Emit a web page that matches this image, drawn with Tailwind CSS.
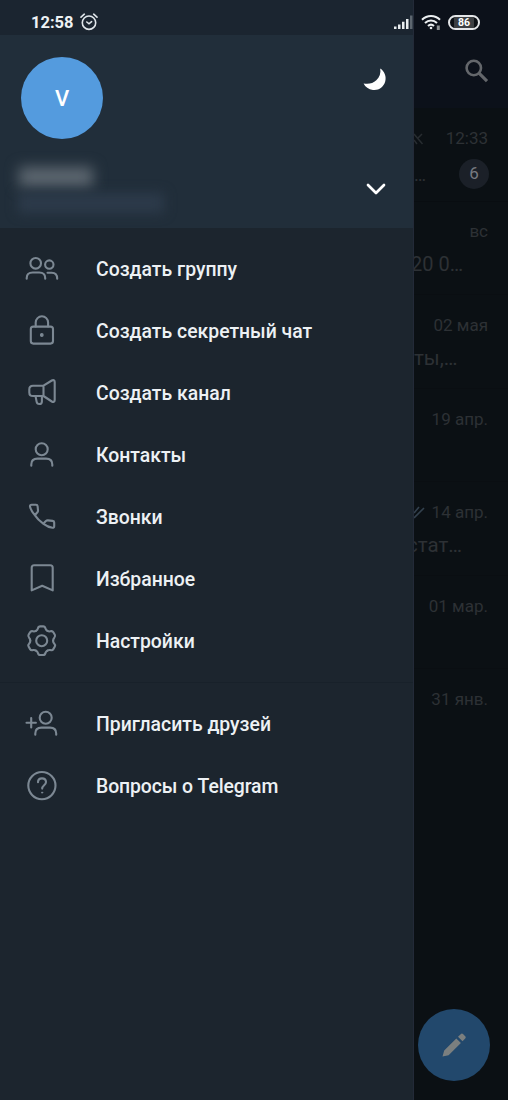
<!DOCTYPE html>
<html lang="ru">
<head>
<meta charset="utf-8">
<title>Telegram</title>
<script src="https://cdn.jsdelivr.net/npm/@tailwindcss/browser@4"></script>
</head>
<body class="bg-[#0b1014]">
<div class="relative flex w-[508px] h-[1100px] overflow-hidden font-['Roboto',sans-serif]">

  <!-- Drawer -->
  <aside class="flex flex-col w-[414px] shrink-0 bg-[#1c252e] border-r border-[#232a38]">
    <header class="flex flex-col h-[228px] bg-[#212e3a] shrink-0">
      <div class="h-[35px] bg-[#1b2530] shrink-0"></div>
      <div class="flex justify-between pl-[21px] pr-[24px] pt-[22px]">
        <div class="flex items-center justify-center size-[82px] rounded-full bg-[#549bde] text-white text-[22px] font-medium">V</div>
        <svg class="mt-[11px]" width="26" height="24" viewBox="0 0 26 24" fill="#fff"><path d="M17.200.4C21.500 3 23.700 8.500 22.200 13.500 20.500 19.500 15.500 22.600 10 21.900 5.500 21.300 2.300 18.900.6 15.400 5.500 16.500 10 15.300 13.300 12.200 16.700 9 18 5 17.200.4Z"/></svg>
      </div>
      <div class="flex justify-between pl-[18px] pr-[27px] pt-[27px]">
        <div class="flex flex-col gap-[5px]">
          <div class="w-[74px] h-[20px] mt-px mb-px ml-px bg-[#5d6770] blur-[7px]"></div>
          <div class="w-[146px] h-[20px] bg-[#2c3a4a] blur-[6px]"></div>
        </div>
        <svg class="mt-[16px]" width="20" height="14" viewBox="0 0 20 14" fill="none" stroke="#fff" stroke-width="2.700" stroke-linecap="round" stroke-linejoin="round"><path d="M2 3l8 8 8-8"/></svg>
      </div>
    </header>

    <nav class="flex flex-col pt-[10px] text-[19.400px] font-medium text-[#edf1f4]">
      <a class="flex items-center h-[62px] pl-[22px] gap-[34px]">
        <svg width="40" height="40" viewBox="0 0 40 40" fill="none" stroke="#7c8893" stroke-width="2.100" stroke-linecap="round" stroke-linejoin="round"><circle cx="13.700" cy="14.300" r="5.300"/><circle cx="27.300" cy="15.600" r="4.200"/><path d="M4.700 29.700V29c0-3.500 2.500-5.500 6-5.500h6.500c3.500 0 6 2 6 5.500v.7M25.500 23.700h4.200c3.500 0 5.500 2.200 5.500 6"/></svg>
        <span class="pt-[2px]">Создать группу</span></a>
      <a class="flex items-center h-[62px] pl-[22px] gap-[34px]">
        <svg width="40" height="40" viewBox="0 0 40 40" fill="none" stroke="#7c8893" stroke-width="2.100" stroke-linecap="round" stroke-linejoin="round"><rect x="8.800" y="15.600" width="22.200" height="17" rx="2.500"/><path d="M13.700 15.500V11.500a6.200 6.200 0 0 1 12.400 0v4"/><circle cx="19.800" cy="24" r="1.300" fill="#7c8893" stroke-width="1.200"/></svg>
        <span class="pt-[2px]">Создать секретный чат</span></a>
      <a class="flex items-center h-[62px] pl-[22px] gap-[34px]">
        <svg width="40" height="40" viewBox="0 0 40 40" fill="none" stroke="#7c8893" stroke-width="2.100" stroke-linecap="round" stroke-linejoin="round"><path d="M21.500 12.700H11c-2.200 0-3.700 1.500-3.700 3.600v3.100c0 2.100 1.500 3.600 3.700 3.600h10.500V12.700l8.300-5.200c1.500-.9 2.900-.3 2.900 1.500v18c0 1.800-1.400 2.400-2.900 1.500L21.500 23M13.500 23l1.100 5.600c.3 1.600 1.200 2.400 2.700 2.400 1.700 0 2.600-1 2.600-2.600V23"/></svg>
        <span class="pt-[2px]">Создать канал</span></a>
      <a class="flex items-center h-[62px] pl-[22px] gap-[34px]">
        <svg width="40" height="40" viewBox="0 0 40 40" fill="none" stroke="#7c8893" stroke-width="2.100" stroke-linecap="round" stroke-linejoin="round"><circle cx="19.700" cy="14.200" r="6"/><path d="M9.300 30.700V29.500c0-3.800 2.400-5.900 6.200-5.900h8.600c3.800 0 6.200 2.100 6.200 5.900v1.200"/></svg>
        <span class="pt-[2px]">Контакты</span></a>
      <a class="flex items-center h-[62px] pl-[22px] gap-[34px]">
        <svg width="40" height="40" viewBox="0 0 40 40" fill="none" stroke="#7c8893" stroke-width="2.100" stroke-linecap="round" stroke-linejoin="round"><path d="M9.600 7.700h4.400c.9 0 1.500.5 1.600 1.400l.4 4.200c.1.800-.1 1.400-.6 2l-2.600 2.900C10.400 15.300 8.500 12.300 8 9.500c-.1-1 .5-1.800 1.600-1.800ZM12.800 18.200c2.200 3.300 5 6.100 8.400 8.500l2.700-2.700c.6-.5 1.200-.7 2-.6l4.700.5c1 .1 1.600.7 1.600 1.600v3.700c0 1.100-.7 1.700-1.800 1.600-3.200-.3-6.300-1.900-9.200-4.100"/></svg>
        <span class="pt-[2px]">Звонки</span></a>
      <a class="flex items-center h-[62px] pl-[22px] gap-[34px]">
        <svg width="40" height="40" viewBox="0 0 40 40" fill="none" stroke="#7c8893" stroke-width="2.100" stroke-linecap="round" stroke-linejoin="round"><path d="M12.200 6.200h16c1.600 0 2.500.9 2.500 2.500v22.700l-10.500-4.700L9.700 31.400V8.700c0-1.600.9-2.500 2.500-2.500Z"/></svg>
        <span class="pt-[2px]">Избранное</span></a>
      <a class="flex items-center h-[62px] pl-[22px] gap-[34px]">
        <svg width="40" height="40" viewBox="0 0 40 40" fill="none" stroke="#7c8893" stroke-width="2.100" stroke-linecap="round" stroke-linejoin="round"><defs><path id="tooth" d="M-5.700-9.900C-4.400-10.600-4.100-11.100-3.800-12.200-3.400-13.800-2.700-14.300-1.500-14.300H1.500C2.700-14.300 3.400-13.800 3.800-12.200 4.100-11.100 4.400-10.600 5.700-9.900"/></defs><g transform="translate(19.700 19.700)"><circle r="5.500"/><use href="#tooth"/><use href="#tooth" transform="rotate(60)"/><use href="#tooth" transform="rotate(120)"/><use href="#tooth" transform="rotate(180)"/><use href="#tooth" transform="rotate(240)"/><use href="#tooth" transform="rotate(300)"/></g></svg>
        <span class="pt-[2px]">Настройки</span></a>
      <div class="h-px mt-[10px] mb-[10px] bg-[#18212a]"></div>
      <a class="flex items-center h-[62px] pl-[22px] gap-[34px]">
        <svg width="40" height="40" viewBox="0 0 40 40" fill="none" stroke="#7c8893" stroke-width="2.100" stroke-linecap="round" stroke-linejoin="round"><circle cx="23.700" cy="13.700" r="6"/><path d="M13.300 30.700V29.500c0-3.800 2.400-5.900 6.200-5.900H28c3.800 0 6.200 2.100 6.200 5.900v1.200M9.200 14v9.400M4.500 18.700h9.400"/></svg>
        <span class="pt-[2px]">Пригласить друзей</span></a>
      <a class="flex items-center h-[62px] pl-[22px] gap-[34px]">
        <svg width="40" height="40" viewBox="0 0 40 40" fill="none" stroke="#7c8893" stroke-width="2.100" stroke-linecap="round" stroke-linejoin="round"><circle cx="19.900" cy="19.600" r="13.600"/><path d="M16 16.300c0-2.300 1.600-3.900 4-3.900s4 1.500 4 3.700c0 3.100-3.800 3.300-3.800 6.500"/><circle cx="20.100" cy="26.600" r=".6" fill="#7c8893" stroke-width="1"/></svg>
        <span class="pt-[2px] tracking-[-0.100px]">Вопросы о Telegram</span></a>
    </nav>
  </aside>

  <!-- Dimmed chat list -->
  <main class="relative flex flex-col w-[94px] overflow-hidden text-[#2d3135]">
    <div class="flex justify-end items-start h-[108px] pt-[58px] pr-[18px] bg-[#0c111a] shrink-0">
      <svg width="26" height="26" viewBox="0 0 26 26" fill="none" stroke="#64676b" stroke-width="2.600"><circle cx="9.800" cy="10" r="7.200"/><path d="M15 15.200l8 8" stroke-width="3.200"/></svg>
    </div>
    <div class="flex flex-col h-[94px] shrink-0 border-b border-[#090d11] pr-[20px] pt-[20px]">
      <div class="flex justify-between items-center h-[22px] text-[17px]"><svg width="10" height="14" viewBox="0 0 10 14" fill="none" stroke="#272c30" stroke-width="1.500"><path d="M8 2L3.500 6.500M0 2l8.500 10M0 8l3 4"/></svg><span>12:33</span></div>
      <div class="flex justify-between items-center mt-[9px]"><span class="text-[18px]">…</span><span class="flex items-center justify-center size-[30px] -mr-px rounded-full bg-[#1b2028] text-[17px] text-[#777a80]">6</span></div>
    </div>
    <div class="flex flex-col h-[93px] shrink-0 border-b border-[#0a0e12] pr-[20px] pt-[19px]">
      <div class="flex justify-end items-center h-[22px] text-[17px]">вс</div>
      <div class="h-[24px] mt-[9px] -ml-[3px] text-[20px] leading-[24px] whitespace-nowrap">20 0…</div>
    </div>
    <div class="flex flex-col h-[94px] shrink-0 border-b border-[#0a0e12] pr-[20px] pt-[20px]">
      <div class="flex justify-end items-center h-[22px] text-[17px] whitespace-nowrap">02 мая</div>
      <div class="h-[24px] mt-[9px] text-[20.500px] leading-[24px] whitespace-nowrap">ты,…</div>
    </div>
    <div class="flex flex-col h-[93px] shrink-0 border-b border-[#0a0e12] pr-[20px] pt-[20px]">
      <div class="flex justify-end items-center h-[22px] text-[17px] whitespace-nowrap">19 апр.</div>
    </div>
    <div class="flex flex-col h-[94px] shrink-0 border-b border-[#0a0e12] pr-[20px] pt-[20px]">
      <div class="flex justify-between items-center h-[22px] text-[17px] whitespace-nowrap"><svg width="12" height="14" viewBox="0 0 12 14" fill="none" stroke="#33414e" stroke-width="1.600"><path d="M0 7L5 1M0 12L10 2"/></svg><span>14 апр.</span></div>
      <div class="h-[24px] mt-[9px] -ml-[7px] text-[20.500px] leading-[24px] whitespace-nowrap">стат…</div>
    </div>
    <div class="flex flex-col h-[93px] shrink-0 border-b border-[#0a0e12] pr-[20px] pt-[20px]">
      <div class="flex justify-end items-center h-[22px] text-[17px] whitespace-nowrap">01 мар.</div>
    </div>
    <div class="flex flex-col h-[94px] shrink-0 pr-[20px] pt-[20px]">
      <div class="flex justify-end items-center h-[22px] text-[17px] whitespace-nowrap">31 янв.</div>
    </div>
    <button class="absolute left-[4px] bottom-[19px] flex items-center justify-center size-[72px] rounded-full bg-[#22486c]">
      <svg width="26" height="26" viewBox="0 0 26 26" fill="#7b7f7f"><path d="M1.500 24.500l1.700-6L15.300 6.400l4.600 4.600L7.600 23.200ZM17 4.700l2.700-2.500c.8-.8 1.600-.8 2.300-.1l2.200 2.200c.7.700.7 1.500 0 2.200L21.500 9.300Z"/></svg>
    </button>
  </main>

  <!-- Status bar -->
  <div class="absolute inset-x-0 top-0 h-[35px] flex items-center pl-[31px] pr-[28px] pt-[9px] text-[#eef2f4]">
    <span class="text-[16.500px] font-bold leading-[20px] pt-px">12:58</span>
    <svg class="ml-[6px]" width="18" height="18" viewBox="0 0 18 18" fill="none" stroke="#e0e6ea" stroke-width="1.600" stroke-linecap="round"><circle cx="9" cy="9.700" r="6.700"/><path d="M1 4.200L4.300 1.200M17 4.200l-3.300-3M6.800 9l2.200 1.800L11.600 8.700"/></svg>
    <svg class="ml-auto" width="19" height="16" viewBox="0 0 19 16" fill="#e8ecee"><path d="M0 12.500h2.500V15H0ZM4 10.500h2.500V15H4ZM8 7.800h2.500V15H8ZM12 5h2.500v10H12Z"/><path d="M16 1.500h2.500V15H16Z" fill="#5d666f"/></svg>
    <svg class="ml-[8px]" width="20" height="17" viewBox="0 0 20 17" fill="none" stroke="#eceff1" stroke-width="2"><path d="M1 5.800c5-5.100 13-5.100 18 0M4 9c3.500-3.500 8.500-3.500 12 0M7 12c1.900-1.800 4.100-1.800 6 0"/><circle cx="10" cy="14" r="1.300" fill="#eceff1" stroke="none"/><path d="M17.300 11.500v4.500" stroke="#8b8f92" stroke-width="3"/></svg>
    <div class="ml-[7px] flex items-center justify-center w-[32px] h-[15px] rounded-full border-2 border-[#e4e6e8] bg-[#0c1015]"><span class="px-[4px] bg-[#3c3f42] text-[10.500px] leading-[11px] font-bold text-white">86</span></div>
  </div>
</div>
</body>
</html>
